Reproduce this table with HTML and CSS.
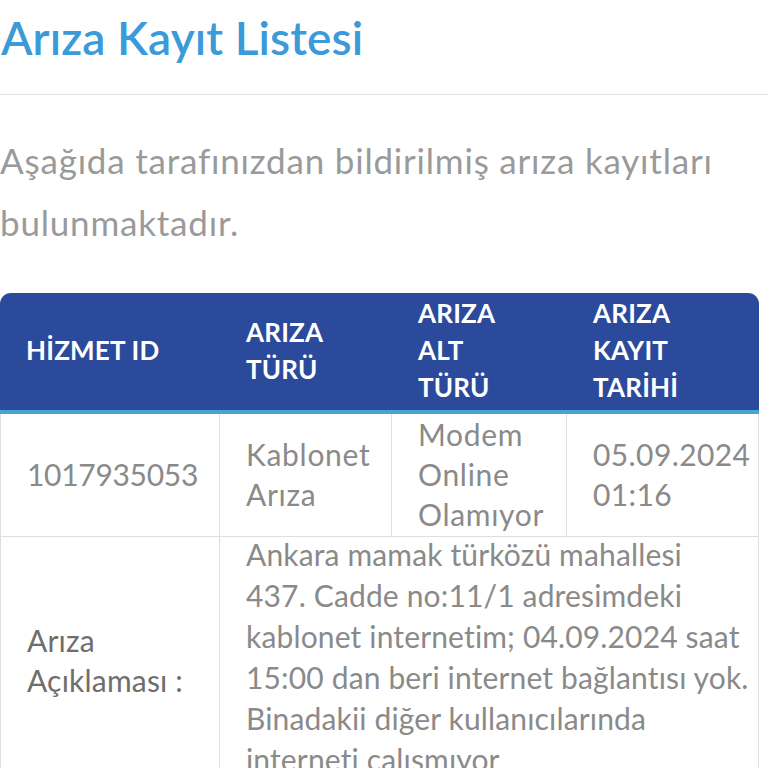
FILE: index.html
```html
<!DOCTYPE html>
<html lang="tr">
<head>
<meta charset="utf-8">
<link rel="stylesheet" href="styles.css">
</head>
<body>
<div class="page">
  <h1 class="title">Arıza Kayıt Listesi</h1>
  <hr class="divider">
  <p class="intro">Aşağıda tarafınızdan bildirilmiş arıza kayıtları bulunmaktadır.</p>
  <table class="records">
    <thead>
      <tr>
        <th class="c1">HİZMET ID</th>
        <th class="c2">ARIZA<br>TÜRÜ</th>
        <th class="c3">ARIZA<br>ALT<br>TÜRÜ</th>
        <th class="c4">ARIZA<br>KAYIT<br>TARİHİ</th>
      </tr>
    </thead>
    <tbody>
      <tr class="main-row">
        <td class="num">1017935053</td>
        <td>Kablonet<br>Arıza</td>
        <td>Modem<br>Online<br>Olamıyor</td>
        <td class="date">05.09.2024<br>01:16</td>
      </tr>
      <tr>
        <td class="label">Arıza<br>Açıklaması :</td>
        <td colspan="3" class="desc"><div class="desc-text">Ankara mamak türközü mahallesi<br>437. Cadde no:11/1 adresimdeki<br>kablonet internetim; 04.09.2024 saat<br>15:00 dan beri internet bağlantısı yok.<br>Binadakii diğer kullanıcılarında<br>interneti calısmıyor</div></td>
      </tr>
    </tbody>
  </table>
</div>
</body>
</html>
```

FILE: styles.css
```css
html, body {
  margin: 0;
  padding: 0;
  background: #ffffff;
}
body {
  font-family: Lato, "Open Sans", sans-serif;
  overflow: hidden;
  height: 768px;
}
*, *::before, *::after {
  box-sizing: border-box;
}
.title {
  margin: 0;
  padding: 10px 0 0 1px;
  font-size: 46px;
  line-height: 56px;
  font-weight: 600;
  color: #3b9ad8;
  letter-spacing: 0.1px;
}
.divider {
  margin: 28px 0 0 0;
  border: 0;
  border-top: 1px solid #e4e4e4;
  height: 0;
}
.intro {
  margin: 34px 0 0 0;
  width: 740px;
  font-size: 35px;
  line-height: 62px;
  letter-spacing: 0.8px;
  color: #9a9a9a;
  font-weight: 400;
}
.records {
  margin-top: 40px;
  width: 759px;
  border-collapse: separate;
  border-spacing: 0;
  table-layout: fixed;
}
.records th {
  background: #2b4a9b;
  color: #ffffff;
  font-size: 26px;
  line-height: 37px;
  font-weight: 700;
  text-align: left;
  padding: 2px 6px 4px 26px;
  height: 118px;
  border-bottom: 4px solid #45a4d8;
  vertical-align: middle;
  letter-spacing: 0.2px;
}
.records th.c1 { width: 220px; border-top-left-radius: 11px; }
.records th.c2 { width: 172px; }
.records th.c3 { width: 175px; }
.records th.c4 { border-top-right-radius: 11px; }
.records td {
  font-size: 30px;
  line-height: 40px;
  color: #8a8a8a;
  padding: 0 4px 2px 26px;
  vertical-align: middle;
  border-right: 1px solid #dedede;
  border-bottom: 1px solid #dedede;
  letter-spacing: 0.7px;
}
.records td.num {
  letter-spacing: -0.3px;
}
.records td.date {
  letter-spacing: 0.4px;
}
.records td:first-child {
  border-left: 1px solid #dedede;
}
.records td.label {
  color: #6e6e6e;
  letter-spacing: 0.2px;
  padding-top: 4px;
}
.records td.desc {
  vertical-align: top;
  padding: 0 2px 0 26px;
  line-height: 41px;
  white-space: nowrap;
  letter-spacing: 0.15px;
}
.desc-text {
  margin-top: -3px;
}
```
